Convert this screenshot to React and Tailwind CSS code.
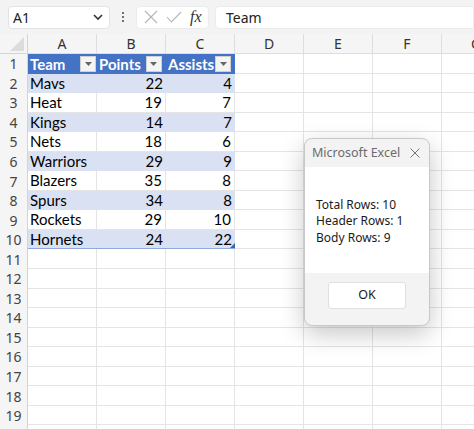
import React from 'react';

const cols = ['A', 'B', 'C', 'D', 'E', 'F', 'G'];

const data = [
  ['Mavs', 22, 4],
  ['Heat', 19, 7],
  ['Kings', 14, 7],
  ['Nets', 18, 6],
  ['Warriors', 29, 9],
  ['Blazers', 35, 8],
  ['Spurs', 34, 8],
  ['Rockets', 29, 10],
  ['Hornets', 24, 22],
];

const cellFont = { fontFamily: 'Lato, "Liberation Sans", sans-serif' };
const uiFont = { fontFamily: '"Noto Sans", "Open Sans", sans-serif' };

const FilterButton = () => (
  <div className="ml-auto mr-[1px] flex h-[16px] w-[16px] shrink-0 items-center justify-center bg-[#f4f4f4] border border-[#d0d0d0]">
    <svg width="7" height="4" viewBox="0 0 7 4">
      <path d="M0 0 L7 0 L3.5 4 Z" fill="#666" />
    </svg>
  </div>
);

const App = () => {
  const rows = Array.from({ length: 20 }, (_, i) => i + 1);

  return (
    <div className="w-[474px] h-[429px] overflow-hidden bg-white relative" style={uiFont}>
      {/* Formula bar */}
      <div className="h-[34px] bg-[#f3f3f3] flex items-center pl-[8px] gap-[6px]">
        <div className="w-[102px] h-[23px] bg-white rounded-[4px] border border-[#e3e3e3] flex items-center px-[4px]">
          <span className="text-[14px] text-[#222]">A1</span>
          <svg className="ml-auto mr-[2px]" width="10" height="7" viewBox="0 0 10 7">
            <path d="M1 1 L5 5 L9 1" stroke="#333" strokeWidth="1.6" fill="none" />
          </svg>
        </div>
        <div className="w-[14px] flex flex-col items-center gap-[2px]">
          <div className="w-[2px] h-[2px] bg-[#444] rounded-full" />
          <div className="w-[2px] h-[2px] bg-[#444] rounded-full" />
          <div className="w-[2px] h-[2px] bg-[#444] rounded-full" />
        </div>
        <div className="w-[73px] h-[23px] bg-white rounded-[4px] border border-[#ececec] flex items-center pl-[7px] gap-[8px]">
          <svg width="14" height="14" viewBox="0 0 14 14">
            <path d="M1 1 L13 13 M13 1 L1 13" stroke="#b5b5b5" strokeWidth="1.1" />
          </svg>
          <svg width="16" height="12" viewBox="0 0 16 12">
            <path d="M1 6 L5.5 11 L15 1" stroke="#b5b5b5" strokeWidth="1.1" fill="none" />
          </svg>
          <span className="text-[16px] italic text-[#333] leading-none" style={{ fontFamily: '"Liberation Serif", serif' }}>fx</span>
        </div>
        <div className="flex-1 h-[23px] bg-white rounded-l-[4px] border border-[#ececec] flex items-center pl-[10px]">
          <span className="text-[14px] text-[#222]">Team</span>
        </div>
      </div>

      {/* Sheet grid */}
      <div className="grid grid-cols-[28px_69px_69px_69px_69px_69px_69px_69px] w-[511px]">
        {/* Column header row */}
        <div className="h-[20px] bg-[#f5f5f5] border-b border-r border-[#d4d4d4] relative overflow-hidden">
          <svg className="absolute right-[3px] bottom-[2px]" width="14" height="14" viewBox="0 0 14 14">
            <path d="M14 0 L14 14 L0 14 Z" fill="#dcdcdc" />
          </svg>
        </div>
        {cols.map((c) => (
          <div key={c} className="h-[20px] bg-[#f5f5f5] border-b border-r border-[#dedede] flex items-center justify-center text-[14px] text-[#333]">
            {c}
          </div>
        ))}

        {rows.map((r) => {
          const isHeader = r === 1;
          const d = r >= 2 && r <= 10 ? data[r - 2] : null;
          const banded = d && r % 2 === 0;
          const tableBg = isHeader ? 'bg-[#4472c4]' : banded ? 'bg-[#d9e1f2]' : 'bg-white';
          const last = r === 10;
          const edge = banded || isHeader ? '' : 'border-b border-r border-[#e4e4e4]';
          const txt = isHeader ? 'text-white font-bold' : 'text-black';
          const bottom = last ? 'border-b border-[#8ea9db]' : '';
          return (
            <React.Fragment key={r}>
              <div className="h-[19.56px] bg-[#f5f5f5] border-r border-[#d4d4d4] flex items-center justify-center text-[14px] text-[#444]">
                {r < 20 ? r : ''}
              </div>
              {isHeader || d ? (
                <>
                  <div className={`h-[19.56px] ${tableBg} flex items-center pl-[2px] text-[15px] ${txt} ${edge} ${bottom}`} style={cellFont}>
                    {isHeader ? (<><span>Team</span><FilterButton /></>) : d[0]}
                  </div>
                  <div className={`h-[19.56px] ${tableBg} flex items-center justify-end pr-[3px] text-[15px] ${txt} ${edge} ${bottom}`} style={cellFont}>
                    {isHeader ? (<><span className="mr-auto pl-[2px]">Points</span><FilterButton /></>) : d[1]}
                  </div>
                  <div className={`h-[19.56px] ${tableBg} flex items-center justify-end pr-[3px] text-[15px] relative ${txt} ${edge} ${bottom}`} style={cellFont}>
                    {isHeader ? (<><span className="mr-auto pl-[2px]">Assists</span><FilterButton /></>) : d[2]}
                    {last && (
                      <svg className="absolute right-0 bottom-0" width="5" height="5" viewBox="0 0 5 5">
                        <path d="M5 0 L5 5 L0 5 Z" fill="#3b64b0" />
                      </svg>
                    )}
                  </div>
                </>
              ) : (
                <>
                  <div className="h-[19.56px] border-b border-r border-[#e4e4e4]" />
                  <div className="h-[19.56px] border-b border-r border-[#e4e4e4]" />
                  <div className="h-[19.56px] border-b border-r border-[#e4e4e4]" />
                </>
              )}
              <div className="h-[19.56px] border-b border-r border-[#e4e4e4]" />
              <div className="h-[19.56px] border-b border-r border-[#e4e4e4]" />
              <div className="h-[19.56px] border-b border-r border-[#e4e4e4]" />
              <div className="h-[19.56px] border-b border-r border-[#e4e4e4]" />
            </React.Fragment>
          );
        })}
      </div>

      {/* Message box */}
      <div className="absolute left-[304px] top-[138px] w-[126px] h-[188px] rounded-[8px] border border-[#c8c8c8] bg-[#f3f3f3] overflow-hidden shadow-[0_8px_24px_rgba(0,0,0,0.22)] flex flex-col">
        <div className="h-[28px] flex items-center pl-[7px] pr-[9px]">
          <span className="text-[12.5px] text-[#6b6b6b]">Microsoft Excel</span>
          <svg className="ml-auto" width="10" height="10" viewBox="0 0 10 10">
            <path d="M0.5 0.5 L9.5 9.5 M9.5 0.5 L0.5 9.5" stroke="#777" strokeWidth="1" />
          </svg>
        </div>
        <div className="h-[106px] bg-white flex flex-col justify-center pl-[11px] text-[12px] text-[#1a1a1a] leading-[16.5px] pt-[3px]">
          <span>Total Rows: 10</span>
          <span>Header Rows: 1</span>
          <span>Body Rows: 9</span>
        </div>
        <div className="flex-1 flex justify-center pt-[9px]">
          <div className="w-[78px] h-[27px] bg-white border border-[#e0e0e0] rounded-[3px] flex items-center justify-center text-[12.5px] text-[#1a1a1a]">
            OK
          </div>
        </div>
      </div>
    </div>
  );
};

export default App;
